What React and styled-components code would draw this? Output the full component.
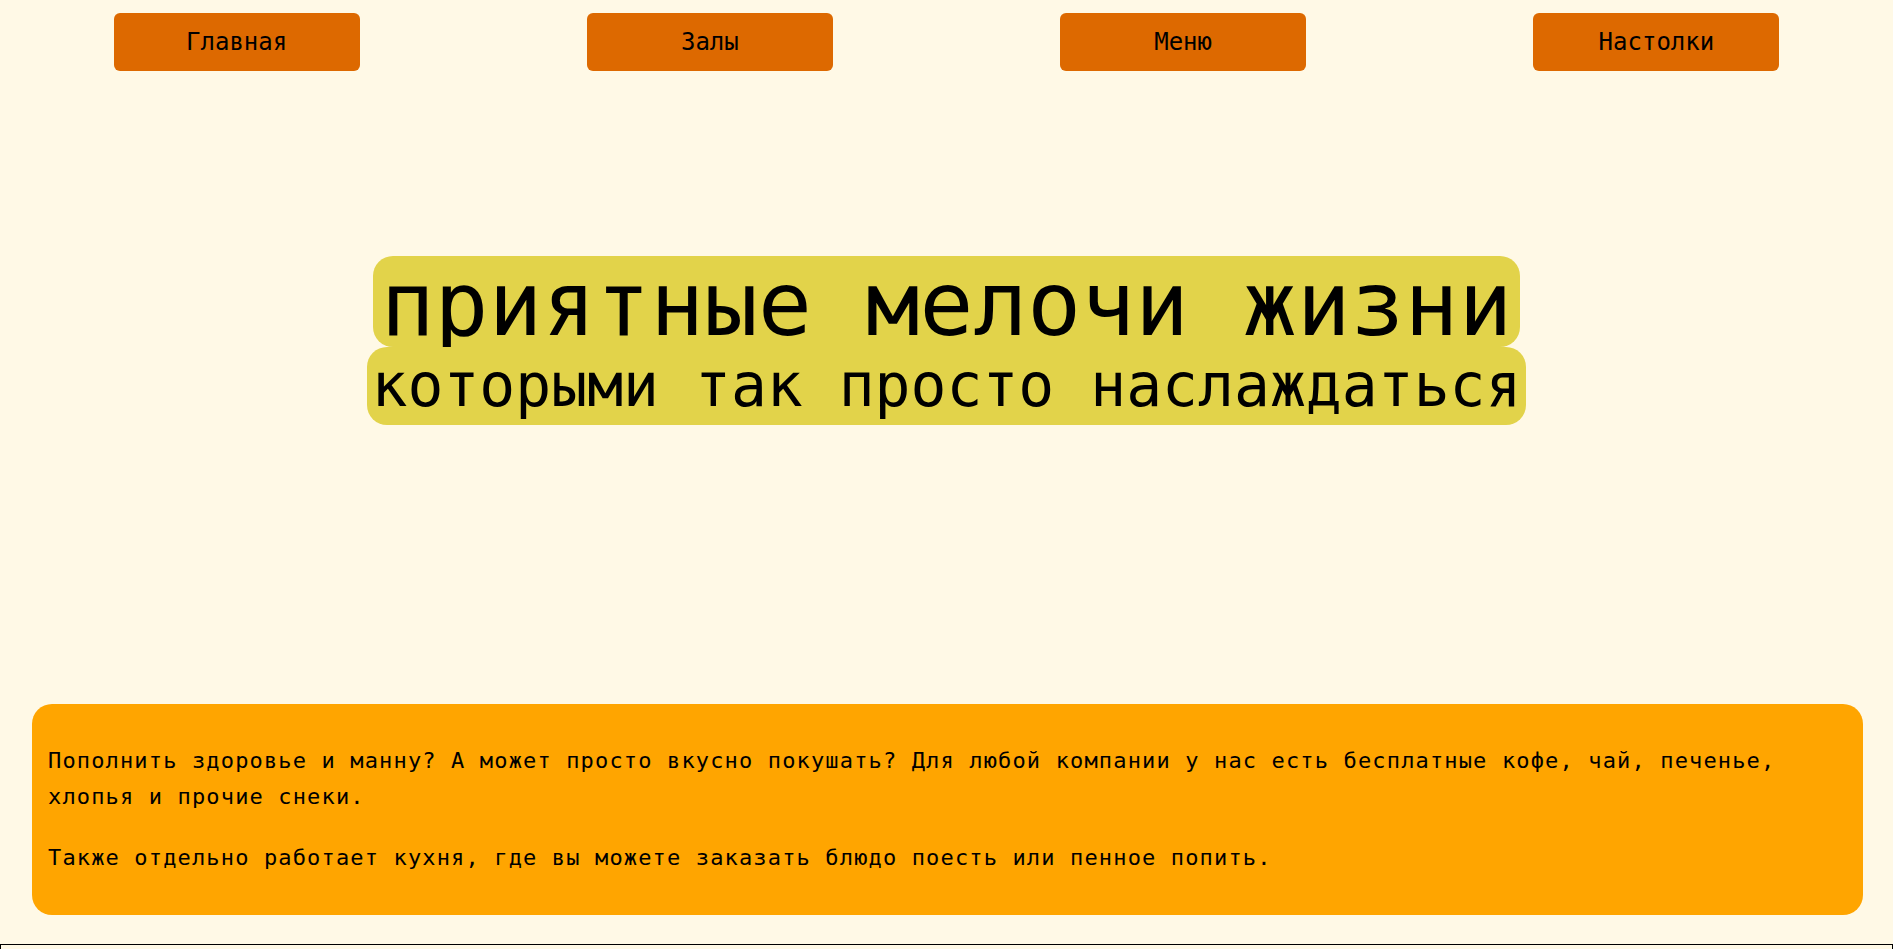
import React from 'react';
import styled, { createGlobalStyle } from 'styled-components';

const GlobalStyle = createGlobalStyle`
  html, body {
    margin: 0;
    padding: 0;
    background: #fff9e6;
  }

  body {
    font-family: "DejaVu Sans Mono", "Liberation Mono", monospace;
    color: #000;
  }
`;

const Page = styled.div`
  display: flex;
  flex-direction: column;
`;

const Nav = styled.nav`
  ul {
    list-style: none;
    margin: 13px 0 0;
    padding: 0;
    display: flex;
    justify-content: space-around;
  }
`;

const NavButton = styled.a`
  display: flex;
  align-items: center;
  justify-content: center;
  width: 246px;
  height: 58px;
  border-radius: 6px;
  background: #dd6900;
  color: #000;
  font-size: 24px;
  text-decoration: none;
  cursor: pointer;
`;

const Hero = styled.section`
  margin-top: 185px;
  display: flex;
  flex-direction: column;
  align-items: center;
`;

const Title = styled.h1`
  margin: 0;
  padding: 5px 8px 0;
  font-size: 89.5px;
  font-weight: 400;
  line-height: 86px;
  background: #e2d34a;
  border-radius: 20px;
`;

const Subtitle = styled.h2`
  margin: 0;
  padding: 5px 5px;
  font-size: 59.7px;
  font-weight: 400;
  line-height: 68px;
  background: #e2d34a;
  border-radius: 20px;
`;

const About = styled.section`
  margin: 279px 30px 0 32px;
  padding: 39px 16px;
  background: #ffa500;
  border-radius: 20px;

  p {
    margin: 0;
    font-size: 22px;
    line-height: 36px;
    letter-spacing: 1.15px;
  }

  p + p {
    margin-top: 25px;
  }
`;

const Footer = styled.footer`
  margin-top: 29px;
  height: 120px;
  border: 1px solid #000;
`;

const links = ['Главная', 'Залы', 'Меню', 'Настолки'];

const App = () => (
  <Page>
    <GlobalStyle />
    <Nav>
      <ul>
        {links.map(link => (
          <li key={link}>
            <NavButton>{link}</NavButton>
          </li>
        ))}
      </ul>
    </Nav>
    <Hero>
      <Title>приятные мелочи жизни</Title>
      <Subtitle>которыми так просто наслаждаться</Subtitle>
    </Hero>
    <About>
      <p>
        Пополнить здоровье и манну? А может просто вкусно покушать? Для любой
        компании у нас есть бесплатные кофе, чай, печенье, хлопья и прочие
        снеки.
      </p>
      <p>
        Также отдельно работает кухня, где вы можете заказать блюдо поесть или
        пенное попить.
      </p>
    </About>
    <Footer />
  </Page>
);

export default App;
